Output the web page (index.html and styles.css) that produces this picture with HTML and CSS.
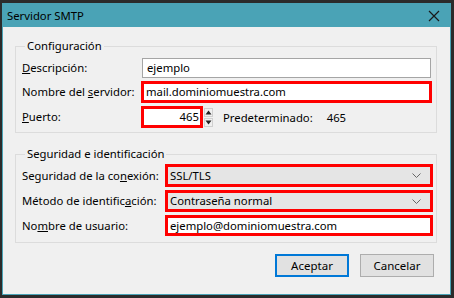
FILE: index.html
```html
<!DOCTYPE html>
<html lang="es">
  <head>
    <meta charset="UTF-8" />
    <meta name="viewport" content="width=device-width, initial-scale=1.0" />
    <title>Servidor SMTP</title>
    <link rel="stylesheet" href="styles.css">
  </head>
  <body>
    <div class="window">
      <div class="titlebar">
        <span class="title">Servidor SMTP</span>
        <svg class="close" width="12" height="12" viewBox="0 0 12 12">
          <path d="M1 1 L11 11 M11 1 L1 11" stroke="#1a1a1a" stroke-width="1.2" fill="none" />
        </svg>
      </div>

      <div class="content">
        <fieldset class="group">
          <legend>Configuración</legend>
          <div class="rows rows-server">
            <label><u>D</u>escripción:</label>
            <div class="input plain">ejemplo</div>

            <label>Nombre del <u>s</u>ervidor:</label>
            <div class="input marked">mail.dominiomuestra.com</div>

            <label><u>P</u>uerto:</label>
            <div class="port-line">
              <div class="input marked port">465</div>
              <div class="spinner">
                <span class="spin-btn">
                  <svg width="7" height="5" viewBox="0 0 7 5"><path d="M0.5 4.5 L3.5 0.5 L6.5 4.5 Z" fill="#222" /></svg>
                </span>
                <span class="spin-btn">
                  <svg width="7" height="5" viewBox="0 0 7 5"><path d="M0.5 0.5 L3.5 4.5 L6.5 0.5 Z" fill="#222" /></svg>
                </span>
              </div>
              <span class="default-label">Predeterminado:</span>
              <span class="default-value">465</span>
            </div>
          </div>
        </fieldset>

        <fieldset class="group group-security">
          <legend>Seguridad e identificación</legend>
          <div class="rows rows-security">
            <label>Seguridad de la co<u>n</u>exión:</label>
            <div class="input marked select">
              <span>SSL/TLS</span>
              <svg class="chevron" width="9" height="5" viewBox="0 0 9 5"><path d="M0.5 0.5 L4.5 4.5 L8.5 0.5" stroke="#666" stroke-width="1" fill="none" /></svg>
            </div>

            <label>Método de identific<u>a</u>ción:</label>
            <div class="input marked select">
              <span>Contraseña normal</span>
              <svg class="chevron" width="9" height="5" viewBox="0 0 9 5"><path d="M0.5 0.5 L4.5 4.5 L8.5 0.5" stroke="#666" stroke-width="1" fill="none" /></svg>
            </div>

            <label>No<u>m</u>bre de usuario:</label>
            <div class="input marked">ejemplo@dominiomuestra.com</div>
          </div>
        </fieldset>

        <div class="buttons">
          <button class="btn btn-default">Aceptar</button>
          <button class="btn">Cancelar</button>
        </div>
      </div>
    </div>
  </body>
</html>
```

FILE: styles.css
```css
html,
body {
  margin: 0;
  height: 100%;
}
body {
  background-color: #2b2b2b;
  font-family: "Noto Sans", "Open Sans", sans-serif;
  font-size: 11.3px;
  color: #000;
}
.window {
  box-sizing: border-box;
  margin: 3px 3px 3px 2px;
  height: 292px;
  border: 1px solid #4aa3b6;
  background-color: #f0f0f0;
  display: flex;
  flex-direction: column;
}
.titlebar {
  height: 23px;
  background-color: #4aa3b6;
  display: flex;
  align-items: center;
  justify-content: space-between;
  padding: 0 10px 0 4px;
}
.title {
  line-height: 16px;
  margin-top: 1px;
}
.close {
  margin-top: 1px;
}
.content {
  padding: 11px 13px 0 12px;
}
.group {
  margin: 0;
  padding: 4px 4px 4px 6px;
  border: 1px solid #dcdcdc;
  min-width: 0;
}
.group legend {
  padding: 0 2px;
  margin-left: 3px;
  line-height: 16px;
}
.group-security {
  margin-top: 13px;
  padding: 2px 3px 6px 6px;
}
.rows {
  display: grid;
  align-items: center;
  row-gap: 3px;
}
.rows-server {
  grid-template-columns: 119px 1fr;
  grid-template-rows: 20px 22px 22px;
}
.rows-security {
  grid-template-columns: 143px 1fr;
  grid-template-rows: 23px 22px 21px;
}
label {
  line-height: 16px;
  white-space: nowrap;
}
.input {
  box-sizing: border-box;
  height: 100%;
  background-color: #fff;
  display: flex;
  align-items: center;
  padding: 0 4px;
  line-height: 16px;
  white-space: nowrap;
}
.plain {
  margin: 0 1px;
  border: 1px solid #a5a5a5;
  padding-left: 4px;
}
.marked {
  border: 3px solid #ff0000;
  padding-left: 2px;
}
.port-line {
  display: flex;
  align-items: center;
  height: 100%;
}
.port {
  width: 62px;
  justify-content: flex-end;
  padding-right: 1px;
}
.spinner {
  display: flex;
  flex-direction: column;
  gap: 1px;
  margin-left: 1px;
}
.spin-btn {
  box-sizing: border-box;
  width: 9px;
  height: 9px;
  background-color: #f0f0f0;
  border: 1px solid #d0d0d0;
  display: flex;
  align-items: center;
  justify-content: center;
}
.default-label {
  margin-left: 10px;
}
.default-value {
  margin-left: 14px;
}
.select {
  background-color: #e5e5e5;
  justify-content: space-between;
  padding-right: 9px;
}
.buttons {
  display: flex;
  justify-content: flex-end;
  gap: 11px;
  margin-top: 11px;
  padding-right: 3px;
}
.btn {
  box-sizing: border-box;
  width: 74px;
  height: 23px;
  background-color: #e1e1e1;
  border: 1px solid #adadad;
  font-family: inherit;
  font-size: 11.5px;
  color: #000;
  padding: 0;
}
.btn-default {
  border: 2px solid #0078d7;
}
```
